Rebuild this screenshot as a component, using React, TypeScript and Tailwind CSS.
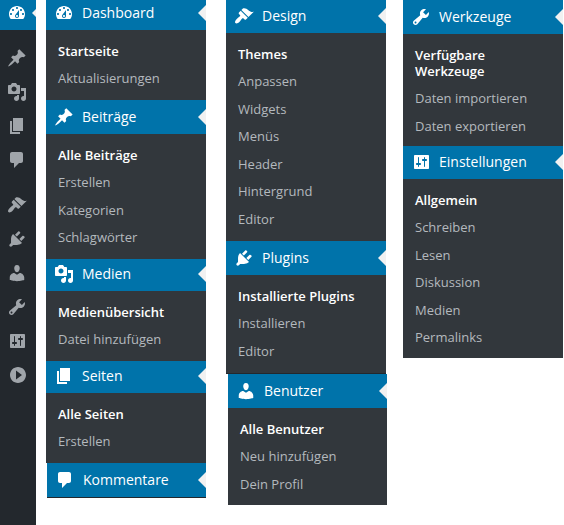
import React from "react";

const icons = {
  dashboard:
    "M3.76 16h12.48c1.1-1.37 1.76-3.11 1.76-5 0-4.42-3.58-8-8-8s-8 3.58-8 8c0 1.89.66 3.63 1.76 5zM10 4c.55 0 1 .45 1 1s-.45 1-1 1-1-.45-1-1 .45-1 1-1zM6 6c.55 0 1 .45 1 1s-.45 1-1 1-1-.45-1-1 .45-1 1-1zm8 0c.55 0 1 .45 1 1s-.45 1-1 1-1-.45-1-1 .45-1 1-1zm-5.37 5.55L12 7v6c0 1.1-.9 2-2 2s-2-.9-2-2c0-.57.24-1.08.63-1.45zM4 10c.55 0 1 .45 1 1s-.45 1-1 1-1-.45-1-1 .45-1 1-1zm12 0c.55 0 1 .45 1 1s-.45 1-1 1-1-.45-1-1 .45-1 1-1zm-5 3c0-.55-.45-1-1-1s-1 .45-1 1 .45 1 1 1 1-.45 1-1z",
  post: "M10.44 3.02l1.82-1.82 6.36 6.35-1.83 1.82c-1.05-.68-2.48-.57-3.41.36l-.75.75c-.92.93-1.04 2.35-.35 3.41l-1.83 1.82-2.41-2.41-2.8 2.79c-.42.42-3.38 2.71-3.8 2.29s1.86-3.39 2.28-3.81l2.79-2.79L4.1 9.36l1.83-1.82c1.05.69 2.48.57 3.4-.36l.75-.75c.93-.92 1.05-2.35.36-3.41z",
  media:
    "M13 11V4c0-.55-.45-1-1-1h-1.67L9 1H5L3.67 3H2c-.55 0-1 .45-1 1v7c0 .55.45 1 1 1h10c.55 0 1-.45 1-1zM7 4.5c1.38 0 2.5 1.12 2.5 2.5S8.38 9.5 7 9.5 4.5 8.38 4.5 7 5.62 4.5 7 4.5zM14 6h5v10.5c0 1.38-1.12 2.5-2.5 2.5S14 17.88 14 16.5s1.12-2.5 2.5-2.5c.17 0 .34.02.5.05V9h-3V6zm-4 8.05V13h2v3.5c0 1.38-1.12 2.5-2.5 2.5S7 17.88 7 16.5 8.12 14 9.5 14c.17 0 .34.02.5.05z",
  page: "M6 15V2h10v13H6zm-1 1h8v2H3V5h2v11z",
  comments:
    "M5 2h9c1.1 0 2 .9 2 2v7c0 1.1-.9 2-2 2h-2l-5 5v-5H5c-1.1 0-2-.9-2-2V4c0-1.1.9-2 2-2z",
  appearance:
    "M14.48 11.06L7.41 3.99l1.5-1.5c.5-.56 2.3-.47 3.51.32 1.21.8 1.43 1.28 2.91 2.1 1.18.64 2.45 1.26 4.45.85zm-.71.71L6.7 4.7 4.93 6.47c-.39.39-.39 1.02 0 1.41l1.06 1.06c.39.39.39 1.03 0 1.42-.6.6-1.43 1.11-2.21 1.69-.35.26-.7.53-1.01.84C1.43 14.23.4 16.08 1.4 17.07c.99 1 2.84-.03 4.18-1.36.31-.31.58-.66.85-1.02.57-.78 1.08-1.61 1.69-2.21.39-.39 1.02-.39 1.41 0l1.06 1.06c.39.39 1.02.39 1.41 0z",
  plugins:
    "M13.11 4.36L9.87 7.6 8 5.73l3.24-3.24c.35-.34 1.05-.2 1.56.32.52.51.66 1.21.31 1.55zm-8 1.77l.91-1.12 9.01 9.01-1.19.84c-.71.71-2.63 1.16-3.82 1.16H6.14L4.9 17.26c-.59.59-1.54.59-2.12 0-.59-.58-.59-1.53 0-2.12l1.24-1.24v-3.88c0-1.13.4-3.19 1.09-3.89zm7.26 3.97l3.24-3.24c.34-.35 1.04-.21 1.55.31.52.51.66 1.21.31 1.55l-3.24 3.25z",
  users:
    "M10 9.25c-2.27 0-2.73-3.44-2.73-3.44C7 4.02 7.82 2 9.97 2c2.16 0 2.98 2.02 2.71 3.81 0 0-.41 3.44-2.68 3.44zm0 2.57L12.72 10c2.39 0 4.52 2.33 4.52 4.53v2.49s-3.65 1.13-7.24 1.13c-3.65 0-7.24-1.13-7.24-1.13v-2.49c0-2.25 1.94-4.48 4.47-4.48z",
  tools:
    "M16.68 9.77c-1.34 1.34-3.3 1.67-4.95.99l-5.41 6.52c-.99.99-2.59.99-3.58 0s-.99-2.59 0-3.57l6.52-5.42c-.68-1.65-.35-3.61.99-4.95 1.28-1.28 3.12-1.62 4.72-1.06l-2.89 2.89 2.82 2.82 2.86-2.87c.53 1.58.18 3.39-1.08 4.65zM3.81 16.21c.4.39 1.04.39 1.43 0 .4-.4.4-1.04 0-1.43-.39-.4-1.03-.4-1.43 0-.39.39-.39 1.03 0 1.43z",
  settings:
    "M18 16V4c0-.55-.45-1-1-1H4c-.55 0-1 .45-1 1v12c0 .55.45 1 1 1h13c.55 0 1-.45 1-1zM8 11h1c.55 0 1 .45 1 1s-.45 1-1 1H8v1.5c0 .28-.22.5-.5.5s-.5-.22-.5-.5V13H6c-.55 0-1-.45-1-1s.45-1 1-1h1V5.5c0-.28.22-.5.5-.5s.5.22.5.5V11zm5-2h-1c-.55 0-1-.45-1-1s.45-1 1-1h1V5.5c0-.28.22-.5.5-.5s.5.22.5.5V7h1c.55 0 1 .45 1 1s-.45 1-1 1h-1v5.5c0 .28-.22.5-.5.5s-.5-.22-.5-.5V9z",
  collapse:
    "M11 2c4.42 0 8 3.58 8 8s-3.58 8-8 8-8-3.58-8-8 3.58-8 8-8zM9 5.5v9l6-4.5z",
};

type IconName = keyof typeof icons;

function Icon({ name }: { name: IconName }) {
  return (
    <svg viewBox="0 0 20 20" className="size-5 shrink-0" fill="currentColor" fillRule="evenodd" aria-hidden="true">
      <path d={icons[name]} />
    </svg>
  );
}

function Notch() {
  return (
    <svg viewBox="0 0 8 16" className="ml-auto h-4 w-2 shrink-0 text-[#f1f1f1]" fill="currentColor" aria-hidden="true">
      <path d="M8 0v16L0 8z" />
    </svg>
  );
}

interface MenuProps {
  icon: IconName;
  title: string;
  items?: string[];
  head?: string;
  list?: string;
  className?: string;
}

function Menu({ icon, title, items, head = "h-[34px]", list = "pt-[7px] pb-2", className = "" }: MenuProps) {
  return (
    <section className={className}>
      <a href="#" className={`flex items-center bg-[#0073aa] pl-2 text-sm text-white ${head}`}>
        <Icon name={icon} />
        <span className="ml-2 whitespace-nowrap">{title}</span>
        <Notch />
      </a>
      {items && (
        <ul className={`bg-[#32373c] ${list}`}>
          {items.map((item) => (
            <li key={item} className="px-3 pt-1.5 pb-[5px] text-[13px] leading-4 text-[#b4b9be] first:font-semibold first:text-white even:pb-1.5">
              <a href="#">{item}</a>
            </li>
          ))}
        </ul>
      )}
    </section>
  );
}

const railGroups: { name: IconName; label: string }[][] = [
  [
    { name: "post", label: "Beiträge" },
    { name: "media", label: "Medien" },
    { name: "page", label: "Seiten" },
    { name: "comments", label: "Kommentare" },
  ],
  [
    { name: "appearance", label: "Design" },
    { name: "plugins", label: "Plugins" },
    { name: "users", label: "Benutzer" },
    { name: "tools", label: "Werkzeuge" },
    { name: "settings", label: "Einstellungen" },
    { name: "collapse", label: "Menü ausklappen" },
  ],
];

function Rail() {
  return (
    <nav className="w-9 shrink-0 bg-[#23282d] text-[#a0a5aa]">
      <a href="#" aria-label="Dashboard" className="flex h-[30px] items-center bg-[#0073aa] pb-1 pl-[7px] text-white">
        <Icon name="dashboard" />
        <svg viewBox="0 0 4 8" className="ml-auto h-2 w-1 text-[#f1f1f1]" fill="currentColor" aria-hidden="true">
          <path d="M4 0v8L0 4z" />
        </svg>
      </a>
      {railGroups.map((group, i) => (
        <ul key={i} className="pt-[11px]">
          {group.map(({ name, label }) => (
            <li key={name}>
              <a href="#" aria-label={label} className="flex h-[34px] items-center pl-[7px]">
                <Icon name={name} />
              </a>
            </li>
          ))}
        </ul>
      ))}
    </nav>
  );
}

export default function App() {
  return (
    <div className="flex min-h-screen bg-white pr-px font-['Open_Sans',sans-serif]">
      <Rail />
      <div className="ml-2.5 min-w-0 flex-1">
        <Menu icon="dashboard" title="Dashboard" head="h-[30px] pb-1" items={["Startseite", "Aktualisierungen"]} />
        <Menu icon="post" title="Beiträge" items={["Alle Beiträge", "Erstellen", "Kategorien", "Schlagwörter"]} />
        <Menu icon="media" title="Medien" head="h-8 pb-0.5" items={["Medienübersicht", "Datei hinzufügen"]} />
        <Menu icon="page" title="Seiten" head="h-8 pb-0.5" items={["Alle Seiten", "Erstellen"]} />
        <Menu icon="comments" title="Kommentare" className="ml-px border-b border-[#23282d]" />
      </div>
      <div className="ml-5 min-w-0 flex-1">
        <Menu
          icon="appearance"
          title="Design"
          head="h-[33px] pb-0.5"
          list="pt-[7px] pb-[9px]"
          items={["Themes", "Anpassen", "Widgets", "Menüs", "Header", "Hintergrund", "Editor"]}
        />
        <Menu
          icon="plugins"
          title="Plugins"
          list="pt-[7px] pb-[9px]"
          className="border-b border-[#23282d]"
          items={["Installierte Plugins", "Installieren", "Editor"]}
        />
        <Menu
          icon="users"
          title="Benutzer"
          className="-mr-px ml-0.5"
          items={["Alle Benutzer", "Neu hinzufügen", "Dein Profil"]}
        />
      </div>
      <div className="ml-[17px] min-w-0 flex-1">
        <Menu
          icon="tools"
          title="Werkzeuge"
          list="py-[7px]"
          items={["Verfügbare Werkzeuge", "Daten importieren", "Daten exportieren"]}
        />
        <Menu
          icon="settings"
          title="Einstellungen"
          head="h-[33px] pb-0.5"
          list="pt-[7px] pb-[7px]"
          items={["Allgemein", "Schreiben", "Lesen", "Diskussion", "Medien", "Permalinks"]}
        />
      </div>
    </div>
  );
}
